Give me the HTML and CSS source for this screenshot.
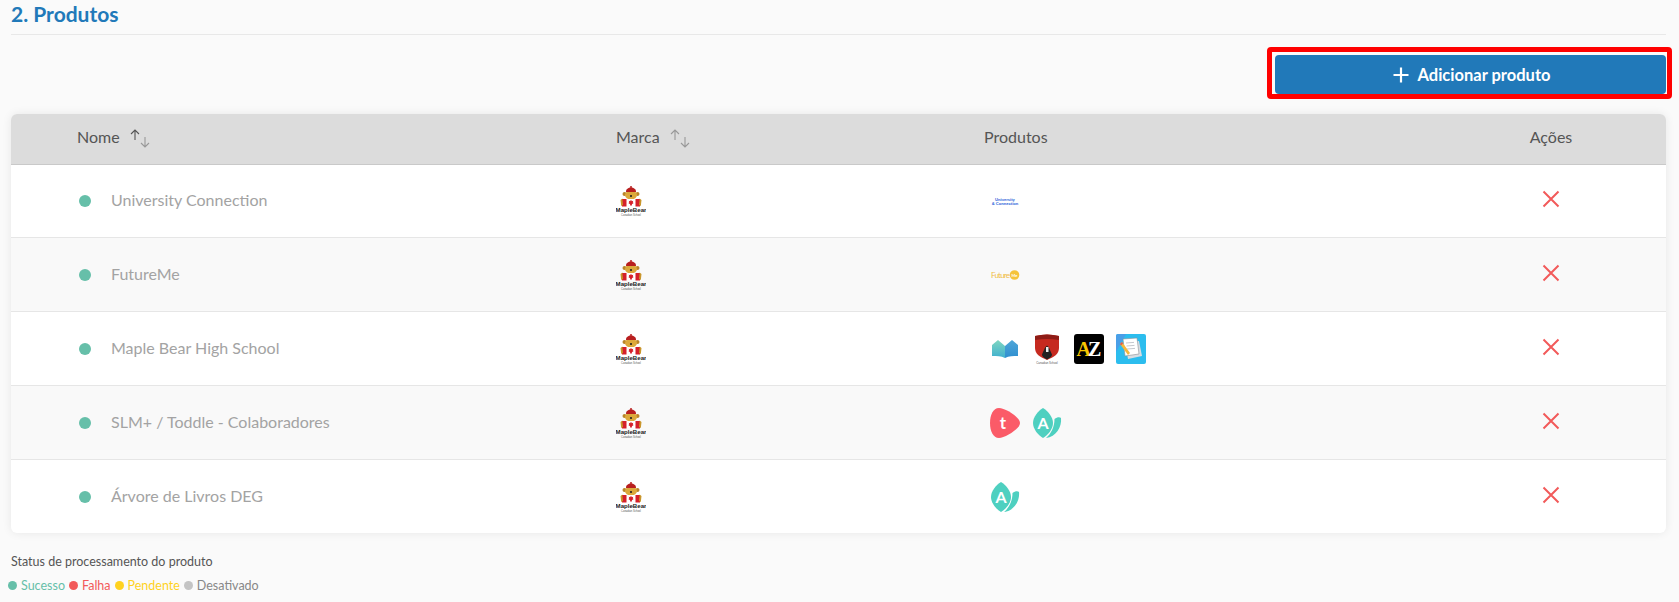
FILE: index.html
```html
<!DOCTYPE html>
<html lang="pt-BR">
<head>
    <meta charset="UTF-8">
    <meta name="viewport" content="width=device-width, initial-scale=1.0">
    <title>Produtos</title>
    <link rel="stylesheet" href="styles.css">
</head>
<body>
    <svg class="sprites" width="0" height="0" aria-hidden="true">
        <symbol id="maple" viewBox="0 0 30 32">
            <circle cx="8.500" cy="9" r="2" fill="#b9862a"/>
            <circle cx="21.500" cy="9" r="2" fill="#b9862a"/>
            <ellipse cx="15" cy="10" rx="6" ry="4.500" fill="#dca93b"/>
            <path d="M10 7c-.5-6 10.500-6 10 0z" fill="#b81f1f"/>
            <circle cx="15" cy="2" r="1" fill="#b81f1f"/>
            <circle cx="15" cy="11" r="1.100" fill="#222"/>
            <path d="M6 14h18v7.500H6z" fill="#fff"/>
            <path d="M6 14h4.500v7.500H6zM19.500 14H24v7.500h-4.500z" fill="#d5202a"/>
            <path d="M15 14.800l.9 1.400 1.300-.4-.4 1.800.9.500-1.800 1.200v1.200h-1.800v-1.200l-1.800-1.200.9-.5-.4-1.800 1.300.4z" fill="#d5202a"/>
            <path d="M4.500 15l1.800-1.500.7 6.500-1.800 1zM25.500 15l-1.800-1.500-.7 6.500 1.800 1z" fill="#c9962c"/>
            <text x="15" y="27" class="maple-name">MapleBear</text>
            <text x="15" y="30.500" class="maple-sub">Canadian School</text>
        </symbol>
        <symbol id="leaf" viewBox="0 0 30 32">
            <path d="M22.500 12C25 10 28 10 29 11 30 20 24 30 14 31 19 27 22.500 20 22.500 12z" fill="#4ed0c0"/>
            <path d="M11 1C16 4 21 10 21 16 21 22 16 28 11 31 6 28 1 22 1 16 1 10 6 4 11 1z" fill="#4ed0c0"/>
            <text x="11" y="22" class="leaf-letter">A</text>
        </symbol>
    </svg>

    <main class="page">
        <h2 class="section-title">2. Produtos</h2>

        <div class="toolbar">
            <div class="add-wrap">
                <button type="button" class="add-btn">
                    <svg width="16" height="16" viewBox="0 0 16 16"><path d="M8 .5v15M.5 8h15" stroke="#fff" stroke-width="2.200" fill="none"/></svg>
                    Adicionar produto
                </button>
                <span class="highlight"></span>
            </div>
        </div>

        <div class="card">
            <table class="products">
                <colgroup>
                    <col class="col-name"><col class="col-brand"><col class="col-products"><col class="col-actions">
                </colgroup>
                <thead>
                    <tr>
                        <th class="th-name">Nome <svg class="sort" width="22" height="20" viewBox="0 0 22 20"><path d="M6 12V2M2 6l4-4 4 4" stroke="#555" stroke-width="1.100" fill="none"/><path d="M16 9v10M12 15l4 4 4-4" stroke="#999" stroke-width="1.100" fill="none"/></svg></th>
                        <th>Marca <svg class="sort" width="22" height="20" viewBox="0 0 22 20"><path d="M6 12V2M2 6l4-4 4 4" stroke="#999" stroke-width="1.100" fill="none"/><path d="M16 9v10M12 15l4 4 4-4" stroke="#999" stroke-width="1.100" fill="none"/></svg></th>
                        <th>Produtos</th>
                        <th class="th-actions">Ações</th>
                    </tr>
                </thead>
                <tbody>
                    <tr>
                        <td class="td-name"><span class="dot"></span>University Connection</td>
                        <td><svg class="brand" width="30" height="32"><use href="#maple"/></svg></td>
                        <td>
                            <div class="logos">
                                <svg width="30" height="30" viewBox="0 0 30 30">
                                    <text x="15" y="14.500" class="uc-text">University</text>
                                    <text x="15" y="18.500" class="uc-text">&amp; Connection</text>
                                </svg>
                            </div>
                        </td>
                        <td class="td-actions"><svg class="remove" width="18" height="18" viewBox="0 0 18 18"><path d="M1.500 1.500l15 15M16.500 1.500l-15 15"/></svg></td>
                    </tr>
                    <tr>
                        <td class="td-name"><span class="dot"></span>FutureMe</td>
                        <td><svg class="brand" width="30" height="32"><use href="#maple"/></svg></td>
                        <td>
                            <div class="logos">
                                <svg width="30" height="30" viewBox="0 0 30 30">
                                    <text x="1" y="18" class="fm-text" textLength="19">Future</text>
                                    <circle cx="24.500" cy="15" r="4.800" fill="#f5c33b"/>
                                    <text x="24.500" y="16.500" class="fm-me">Me</text>
                                </svg>
                            </div>
                        </td>
                        <td class="td-actions"><svg class="remove" width="18" height="18" viewBox="0 0 18 18"><path d="M1.500 1.500l15 15M16.500 1.500l-15 15"/></svg></td>
                    </tr>
                    <tr>
                        <td class="td-name"><span class="dot"></span>Maple Bear High School</td>
                        <td><svg class="brand" width="30" height="32"><use href="#maple"/></svg></td>
                        <td>
                            <div class="logos">
                                <svg width="30" height="30" viewBox="0 0 30 30">
                                    <defs>
                                        <linearGradient id="book-left" x1="0" y1="0" x2="0" y2="1"><stop offset="0" stop-color="#7fd6c0"/><stop offset="1" stop-color="#3fb0cf"/></linearGradient>
                                        <linearGradient id="book-right" x1="0" y1="0" x2="0" y2="1"><stop offset="0" stop-color="#4fa6d8"/><stop offset="1" stop-color="#2f8fd0"/></linearGradient>
                                    </defs>
                                    <path d="M2 11l6-5 7 6v12c-4-2-8-2-13-2z" fill="url(#book-left)"/>
                                    <path d="M28 11l-6-5-7 6v12c4-2 8-2 13-2z" fill="url(#book-right)"/>
                                </svg>
                                <svg width="30" height="30" viewBox="0 0 30 30">
                                    <path d="M3 2c8-2 16-2 24 0v12c0 6-5 9-12 12C8 23 3 20 3 14z" fill="#c62a20"/>
                                    <path d="M3 2c8-2 16-2 24 0v4c-8-1.500-16-1.500-24 0z" fill="#8e1c16"/>
                                    <path d="M15 25.500c-3-1.500-5-3-5-5 2-4 2-6 5-9 3 3 3 5 5 9 0 2-2 3.500-5 5z" fill="#222"/>
                                    <path d="M14 13h2.500v5H14z" fill="#eee"/>
                                    <text x="15" y="29.500" class="shield-sub">Canadian School</text>
                                </svg>
                                <svg width="30" height="30" viewBox="0 0 30 30">
                                    <rect width="30" height="30" rx="3" fill="#000"/>
                                    <text x="15" y="22" class="az-mark"><tspan class="az-a">A</tspan><tspan class="az-z" dx="-3">Z</tspan></text>
                                </svg>
                                <svg width="30" height="30" viewBox="0 0 30 30">
                                    <rect width="30" height="30" rx="2" fill="#2cbdee"/>
                                    <path d="M0 2a2 2 0 012-2h8L0 18z" fill="#4a9fe8"/>
                                    <path d="M9 9l14-2 3 15-14 3z" fill="#d9dde2"/>
                                    <path d="M7 5l14-1 2 16-14 2z" fill="#fff" stroke="#8a8f96" stroke-width=".6"/>
                                    <path d="M10 9l8-.600M10.500 12l8-.600M11 15l8-.600" stroke="#b5b9c0" stroke-width=".8"/>
                                    <path d="M4 10l2-2 8 11-2 2z" fill="#f6b73c"/>
                                    <path d="M4 10l2-2 1 1.400-2 2z" fill="#e2574c"/>
                                </svg>
                            </div>
                        </td>
                        <td class="td-actions"><svg class="remove" width="18" height="18" viewBox="0 0 18 18"><path d="M1.500 1.500l15 15M16.500 1.500l-15 15"/></svg></td>
                    </tr>
                    <tr>
                        <td class="td-name"><span class="dot"></span>SLM+ / Toddle - Colaboradores</td>
                        <td><svg class="brand" width="30" height="32"><use href="#maple"/></svg></td>
                        <td>
                            <div class="logos">
                                <svg width="30" height="30" viewBox="0 0 30 30">
                                    <path d="M9 0c6 0 21 9 21 15S15 30 9 30C3 30 0 23 0 15S3 0 9 0z" fill="#fb5b68"/>
                                    <text x="13" y="21" class="toddle-t">t</text>
                                </svg>
                                <svg width="30" height="32"><use href="#leaf"/></svg>
                            </div>
                        </td>
                        <td class="td-actions"><svg class="remove" width="18" height="18" viewBox="0 0 18 18"><path d="M1.500 1.500l15 15M16.500 1.500l-15 15"/></svg></td>
                    </tr>
                    <tr>
                        <td class="td-name"><span class="dot"></span>Árvore de Livros DEG</td>
                        <td><svg class="brand" width="30" height="32"><use href="#maple"/></svg></td>
                        <td>
                            <div class="logos">
                                <svg width="30" height="32"><use href="#leaf"/></svg>
                            </div>
                        </td>
                        <td class="td-actions"><svg class="remove" width="18" height="18" viewBox="0 0 18 18"><path d="M1.500 1.500l15 15M16.500 1.500l-15 15"/></svg></td>
                    </tr>
                </tbody>
            </table>
        </div>

        <p class="legend-title">Status de processamento do produto</p>
        <div class="legend">
            <span class="legend-item ok"><i></i>Sucesso</span>
            <span class="legend-item fail"><i></i>Falha</span>
            <span class="legend-item pending"><i></i>Pendente</span>
            <span class="legend-item off"><i></i>Desativado</span>
        </div>
    </main>
</body>
</html>
```

FILE: styles.css
```css
html, body {
    margin: 0;
    height: 100%;
    overflow: hidden;
}

body {
    background-color: #fafafa;
    font-family: "Lato", "Noto Sans", sans-serif;
    color: #555;
}

.sprites {
    display: none;
}

.page {
    padding: 0 13px 0 11px;
}

.section-title {
    margin: 0;
    height: 34px;
    line-height: 27px;
    font-size: 21px;
    font-weight: 700;
    color: #2179b9;
    border-bottom: 1px solid #e8e8e8;
}

.toolbar {
    display: flex;
    justify-content: flex-end;
    padding-top: 20px;
}

.add-wrap {
    position: relative;
}

.add-btn {
    display: flex;
    align-items: center;
    justify-content: center;
    gap: 9px;
    width: 391px;
    height: 39px;
    padding: 0 0 0 2px;
    background-color: #2179b9;
    color: #fff;
    font-family: inherit;
    font-size: 16.500px;
    font-weight: 700;
    border: none;
    border-radius: 4px;
}

/* red annotation box drawn on the screenshot */
.highlight {
    position: absolute;
    top: -8px;
    left: -8px;
    right: -6px;
    bottom: -5px;
    border: 5px solid #ff0000;
    border-radius: 4px;
    box-sizing: border-box;
}

.card {
    margin-top: 20px;
    background-color: #fff;
    border-radius: 6px;
    overflow: hidden;
    box-shadow: 0 0 10px rgba(0, 0, 0, 0.08);
}

.products {
    width: 100%;
    table-layout: fixed;
    border-collapse: collapse;
}

.col-name { width: 593px; }
.col-brand { width: 368px; }
.col-products { width: 464px; }
.col-actions { width: 230px; }

.products th {
    height: 45px;
    padding: 0 0 5px 12px;
    background-color: #dcdcdc;
    border-bottom: 1px solid #c9c9c9;
    font-size: 16px;
    font-weight: 400;
    text-align: left;
    color: #555;
}

.products th.th-name {
    padding-left: 66px;
}

.products th.th-actions {
    padding-left: 0;
    text-align: center;
}

.sort {
    margin: -8px 0 -8px 5px;
    vertical-align: 3px;
}

.products td {
    height: 73px;
    padding: 0 0 0 12px;
    border-bottom: 1px solid #e6e6e6;
    font-size: 16px;
    color: #a3a3a3;
}

.products tbody tr:first-child td {
    height: 72px;
}

.products tbody tr:nth-child(even) td {
    background-color: #f9f9f9;
}

.products tbody tr:last-child td {
    border-bottom: none;
}

.products td.td-name {
    height: 70px;
    padding: 0 0 3px 68px;
}

.products tbody tr:first-child td.td-name {
    height: 69px;
}

.dot {
    display: inline-block;
    width: 12px;
    height: 12px;
    margin-right: 20px;
    border-radius: 50%;
    background-color: #66bfa9;
    vertical-align: -1px;
}

.brand {
    display: block;
}

.logos {
    display: flex;
    align-items: center;
    gap: 12px;
    padding-left: 6px;
}

.products td.td-actions {
    padding-left: 0;
    text-align: center;
}

.remove {
    display: block;
    margin: -4px auto 0;
    fill: none;
    stroke: #f25a5a;
    stroke-width: 2;
}

.maple-name {
    font: 700 6.100px "Liberation Sans", sans-serif;
    text-anchor: middle;
    fill: #222;
}

.maple-sub {
    font: 2.600px "Liberation Sans", sans-serif;
    text-anchor: middle;
    fill: #555;
}

.shield-sub {
    font: 2.800px "Liberation Sans", sans-serif;
    text-anchor: middle;
    fill: #555;
}

.leaf-letter {
    font: 700 16px "Lato", sans-serif;
    text-anchor: middle;
    fill: #fff;
}

.uc-text {
    font: 700 4.100px "Liberation Sans", sans-serif;
    text-anchor: middle;
    fill: #2a62d8;
}

.fm-text {
    font: 8px "Lato", sans-serif;
    fill: #f0bd45;
}

.fm-me {
    font: 700 4px "Lato", sans-serif;
    text-anchor: middle;
    fill: #fff;
}

.az-mark {
    font: 700 20px "Liberation Serif", serif;
    text-anchor: middle;
}

.az-a {
    fill: #f7c600;
}

.az-z {
    fill: #fff;
}

.toddle-t {
    font: 700 17px "Lato", sans-serif;
    text-anchor: middle;
    fill: #fff;
}

.legend-title {
    margin: 21px 0 0;
    font-size: 12.500px;
    line-height: 16px;
    color: #555;
}

.legend {
    display: flex;
    gap: 4px;
    margin: 8px 0 0 -3px;
    font-size: 12.500px;
    line-height: 16px;
}

.legend-item i {
    display: inline-block;
    width: 9px;
    height: 9px;
    margin-right: 4px;
    border-radius: 50%;
    background-color: currentColor;
}

.legend-item.ok { color: #66bfa9; }
.legend-item.fail { color: #f25a5a; }
.legend-item.pending { color: #ffd21e; }
.legend-item.off { color: #888; }
.legend-item.off i { background-color: #c4c4c4; }
```
